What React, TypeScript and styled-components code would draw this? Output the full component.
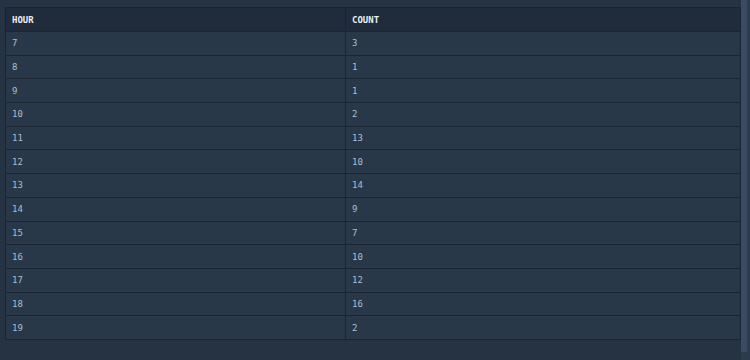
import React from 'react';
import styled, { createGlobalStyle } from 'styled-components';

const rows: [number, number][] = [
  [7, 3], [8, 1], [9, 1], [10, 2], [11, 13], [12, 10], [13, 14],
  [14, 9], [15, 7], [16, 10], [17, 12], [18, 16], [19, 2],
];

const GlobalStyle = createGlobalStyle`
  html, body {
    margin: 0;
    padding: 0;
    background: #253343;
  }
`;

const Page = styled.div`
  display: flex;
  width: 750px;
  height: 360px;
  overflow: hidden;
`;

const Content = styled.div`
  flex: 1;
  padding: 7px 0 0 5px;
`;

const Scrollbar = styled.div`
  width: 9px;
  display: flex;
  background: #2b3b4d;
`;

const Thumb = styled.div`
  width: 6px;
  height: 352px;
  background: #3a4b62;
`;

const Table = styled.table`
  width: 736px;
  border-collapse: collapse;
  table-layout: fixed;
  font-family: "DejaVu Sans Mono", "Liberation Mono", monospace;
  font-size: 9px;
`;

const HeadCell = styled.th`
  height: 23px;
  padding: 0 6px;
  text-align: left;
  font-weight: bold;
  color: #e8eef5;
  background: #202b3c;
  border: 1px solid #1b2431;
`;

const Cell = styled.td`
  height: 22.7px;
  padding: 0 6px;
  color: #a9bfd3;
  background: #283848;
  border: 1px solid #1c2633;
`;

export default function App() {
  return (
    <Page>
      <GlobalStyle />
      <Content>
        <Table>
          <colgroup>
            <col style={{ width: 340 }} />
            <col />
          </colgroup>
          <thead>
            <tr>
              <HeadCell>HOUR</HeadCell>
              <HeadCell>COUNT</HeadCell>
            </tr>
          </thead>
          <tbody>
            {rows.map(([hour, count]) => (
              <tr key={hour}>
                <Cell>{hour}</Cell>
                <Cell>{count}</Cell>
              </tr>
            ))}
          </tbody>
        </Table>
      </Content>
      <Scrollbar>
        <Thumb />
      </Scrollbar>
    </Page>
  );
}
